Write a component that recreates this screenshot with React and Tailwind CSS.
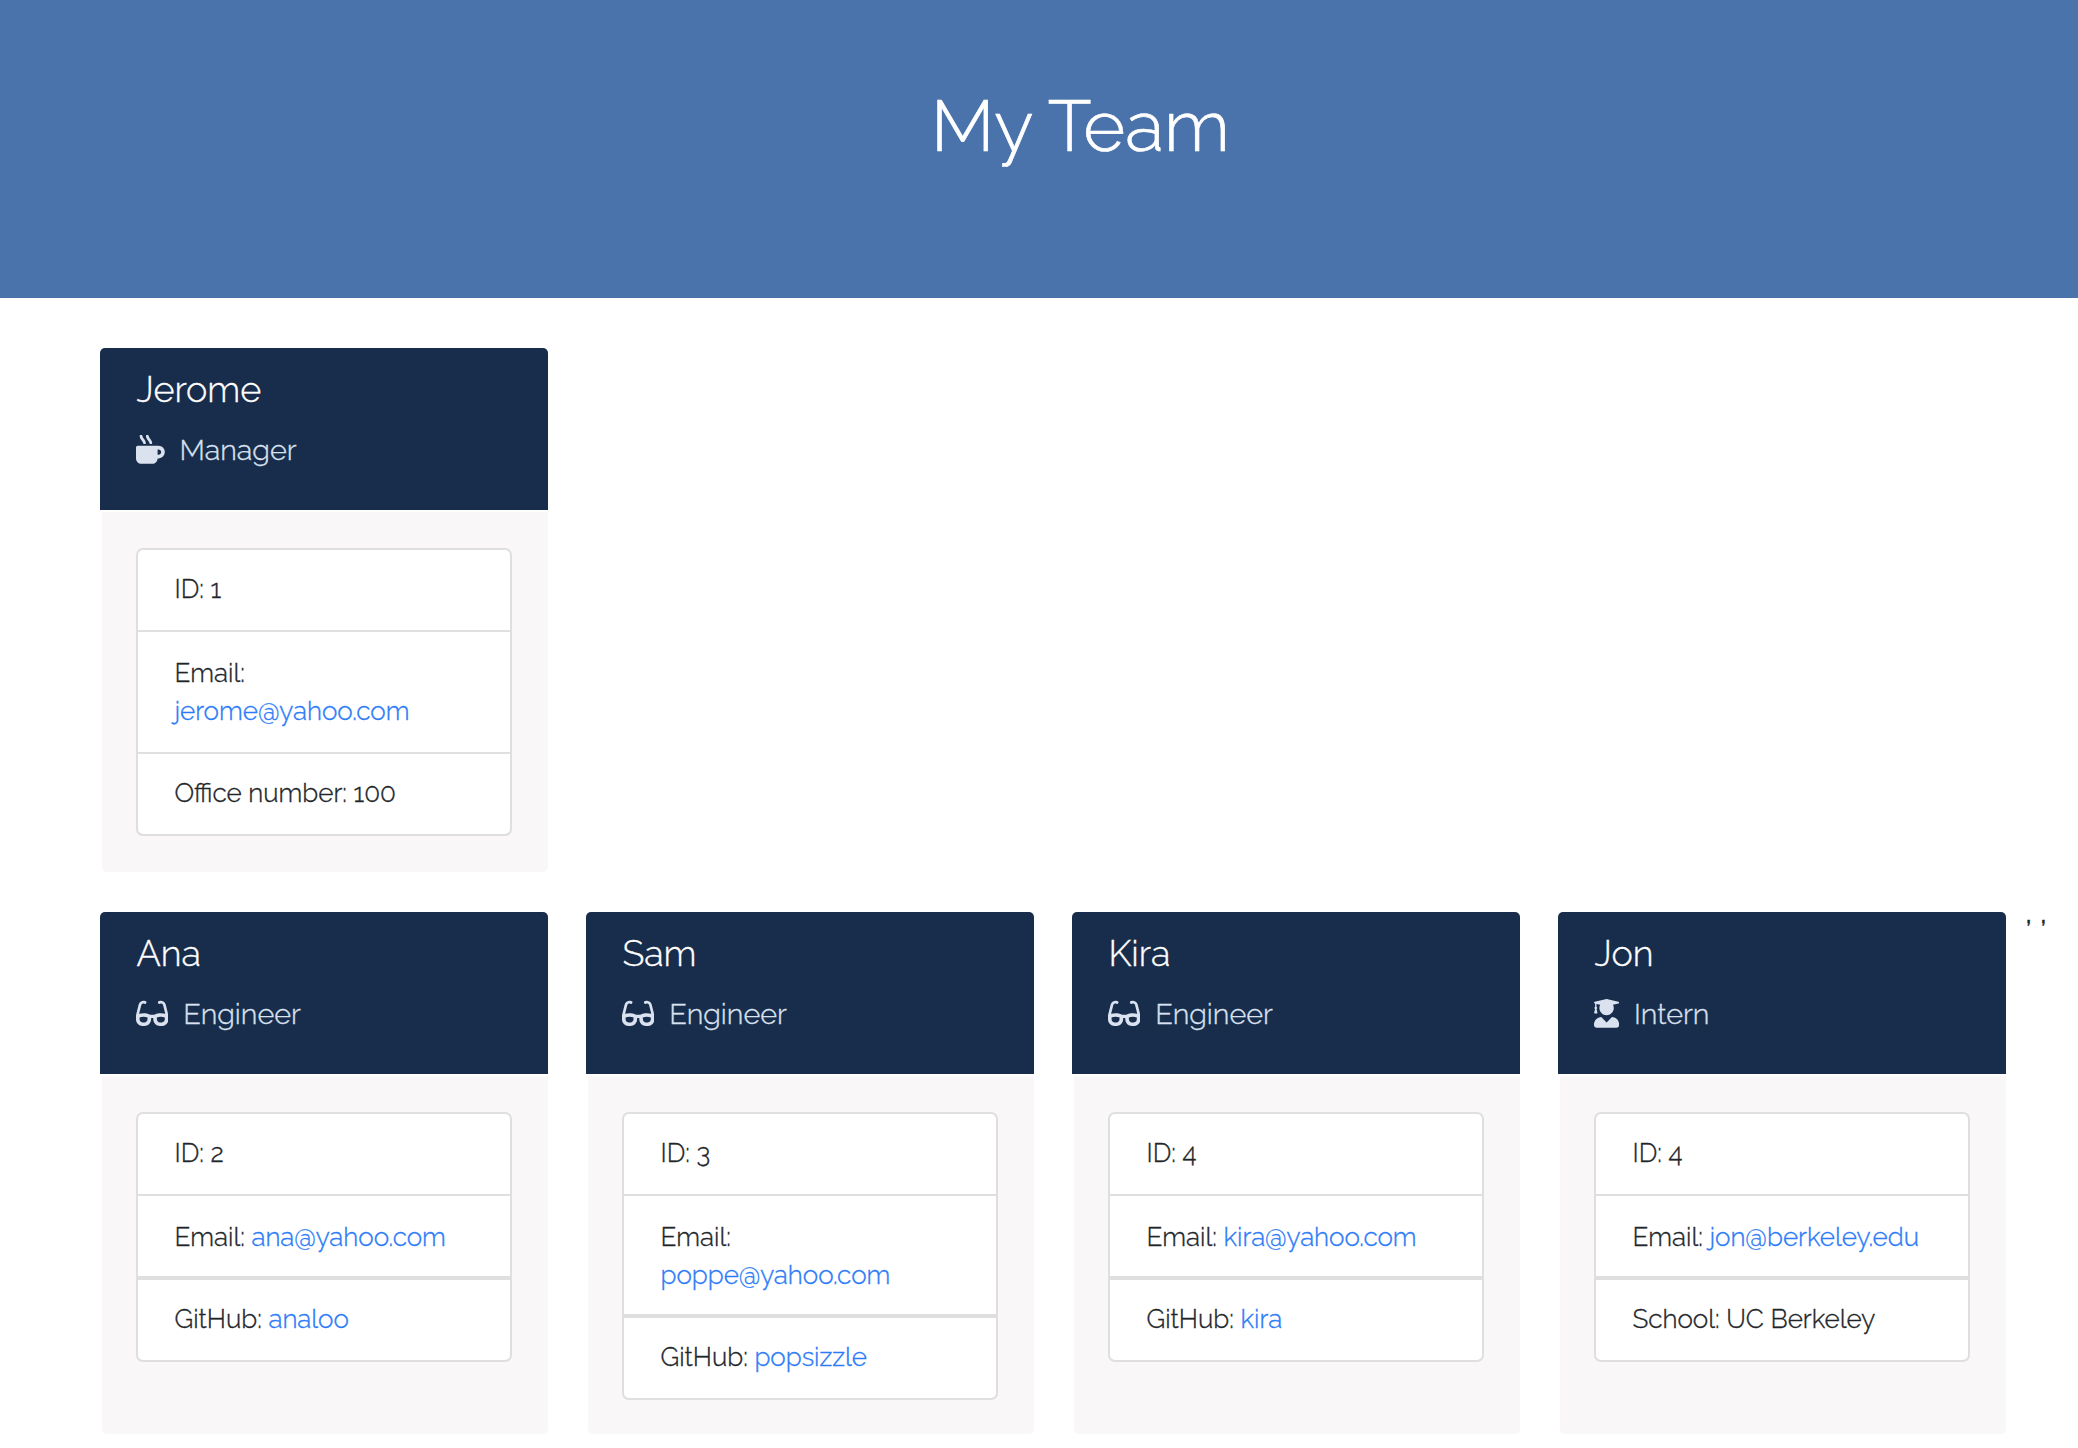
import { FaMugHot, FaGlasses, FaUserGraduate } from "react-icons/fa";

const roles = {
  Manager: <FaMugHot className="mt-[3px] h-[28.8px] w-[28.8px] shrink-0" />,
  Engineer: <FaGlasses className="mt-[3px] h-[28.8px] w-[32.4px] shrink-0" />,
  Intern: <FaUserGraduate className="mt-[3px] h-[28.8px] w-[25.2px] shrink-0" />,
};

const manager = {
  name: "Jerome",
  role: "Manager",
  id: "1",
  email: "jerome@yahoo.com",
  extra: { label: "Office number:", text: "100" },
};

const team = [
  { name: "Ana", role: "Engineer", id: "2", email: "ana@yahoo.com", extra: { label: "GitHub:", link: "analoo" } },
  { name: "Sam", role: "Engineer", id: "3", email: "poppe@yahoo.com", extra: { label: "GitHub:", link: "popsizzle" } },
  { name: "Kira", role: "Engineer", id: "4", email: "kira@yahoo.com", extra: { label: "GitHub:", link: "kira" } },
  { name: "Jon", role: "Intern", id: "4", email: "jon@berkeley.edu", extra: { label: "School:", text: "UC Berkeley" } },
];

function Card({ person, lead }) {
  const { name, role, id, email, extra } = person;
  return (
    <article className="flex w-[448px] shrink-0 flex-col">
      <header className="h-[162px] rounded-t-[5px] bg-[#182d4b] px-9 pt-5">
        <h2 className="pl-[0.5px] text-[36px] leading-[43px] text-white">{name}</h2>
        <h3 className="mt-[21px] flex items-start gap-[14.8px] text-[28.8px] leading-[35px] text-[#dae1ef]">
          {roles[role]}
          <span className="pt-px">{role}</span>
        </h3>
      </header>
      <div className="mt-0.5 ml-0.5 grow rounded-b-[5px] bg-[#f9f7f8] pt-9 pr-9 pb-[34px] pl-[34px]">
        <ul className="rounded-[7px] border-2 border-[#dfdfdf] bg-white text-[26px] leading-[38px] text-[#212529]">
          <li className="h-20 px-[36.5px] pt-5">ID: {id}</li>
          <li className={lead ? "border-t-2 border-[#dfdfdf] px-[36.5px] pt-[22px] pb-[22px]" : "border-t-2 border-[#dfdfdf] px-[36.5px] pt-[22px] pb-5"}>
            Email: <a className="text-[#2b7bf8]">{email}</a>
          </li>
          <li className={lead ? "h-[82px] border-t-2 border-[#dfdfdf] px-[36.5px] pt-5" : "h-[84px] border-t-4 border-[#dfdfdf] px-[36.5px] pt-5"}>
            {extra.label} {extra.link ? <a className="text-[#2b7bf8]">{extra.link}</a> : extra.text}
          </li>
        </ul>
      </div>
    </article>
  );
}

export default function App() {
  return (
    <main className="h-[1448px] overflow-hidden bg-white font-['Raleway',Lato,sans-serif] font-light [-webkit-text-stroke:0.35px]">
      <div className="h-[298px] bg-[#4a73ab] pt-[83px] pl-[83px] text-center text-white">
        <h1 className="text-[72px] leading-[86px] [-webkit-text-stroke:0.7px]">My Team</h1>
      </div>
      <section className="mt-[50px] flex h-[524px] pl-[100px]">
        <Card person={manager} lead />
      </section>
      <section className="mt-10 flex h-[522px] gap-[38px] pl-[100px]">
        {team.map((person) => (
          <Card key={person.name} person={person} />
        ))}
        <p className="-mt-6 -ml-[19px] shrink-0 text-[32px] leading-[48px] font-normal text-[#212529] [word-spacing:-0.6px]">, ,</p>
      </section>
    </main>
  );
}
